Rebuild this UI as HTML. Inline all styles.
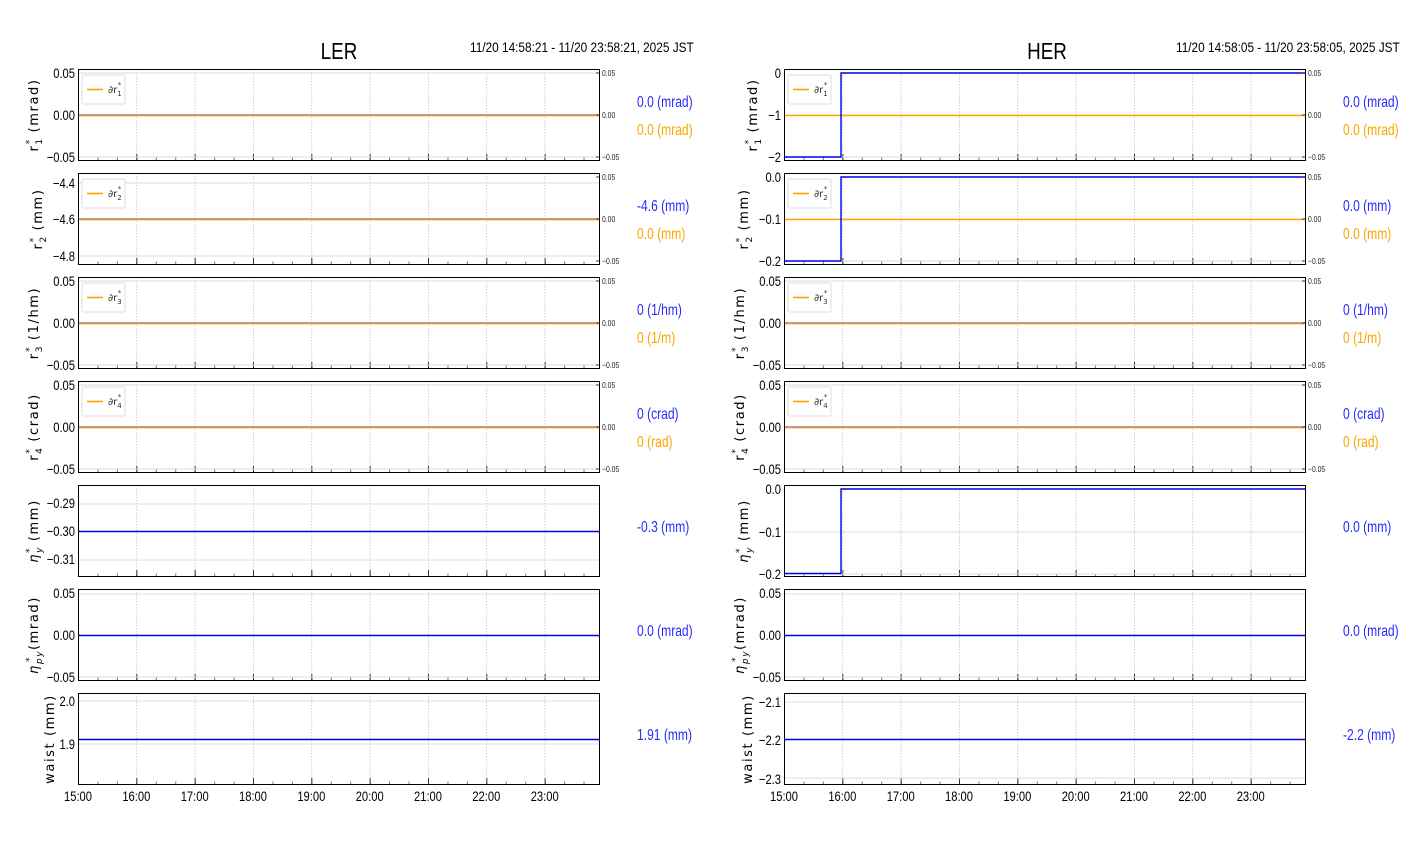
<!DOCTYPE html>
<html><head><meta charset="utf-8"><style>
html,body{margin:0;padding:0;background:#fff;}
svg{display:block;font-family:"Liberation Sans",sans-serif;}
.tl{font-size:14px;fill:#000;text-anchor:end;}
.rl{font-size:8.5px;fill:#222;}
.yl{font-size:13px;font-family:"DejaVu Sans",sans-serif;text-anchor:middle;letter-spacing:1.6px;}
.bv{font-size:15.5px;fill:#2a2aff;}
.ov{font-size:15.5px;fill:#ffa500;}
.xl{font-size:14px;text-anchor:middle;}
</style></head><body>
<svg width="1412" height="864" viewBox="0 0 1412 864" xmlns="http://www.w3.org/2000/svg">
<defs>
<pattern id="vg" patternUnits="userSpaceOnUse" width="58.33" height="92"><line x1="0.3" y1="0" x2="0.3" y2="92" stroke="#b8b8b8" stroke-width="0.8" stroke-dasharray="1.5,1.5"/></pattern>
<pattern id="mt" patternUnits="userSpaceOnUse" width="19.444" height="92"><line x1="0.5" y1="92" x2="0.5" y2="88.5" stroke="#555" stroke-width="0.8"/></pattern>
<pattern id="Mt" patternUnits="userSpaceOnUse" width="58.33" height="92"><line x1="0.5" y1="92" x2="0.5" y2="85" stroke="#333" stroke-width="1"/></pattern>
<g id="fr">
<rect width="522" height="92" fill="url(#vg)"/>
<rect width="522" height="92" fill="url(#mt)"/>
<rect width="522" height="92" fill="url(#Mt)"/>
</g>
<g id="lg">
<rect x="4" y="6" width="43" height="29" rx="2" fill="#fff" stroke="#ddd" stroke-width="1"/>
<line x1="9" y1="20.5" x2="25" y2="20.5" stroke="#ffa500" stroke-width="1.6"/>
</g>
<g id="bd"><rect x="0.5" y="0.5" width="521" height="91" fill="none" stroke="#000" stroke-width="1"/></g>
<g id="rax">
<line x1="522" y1="4" x2="518" y2="4" stroke="#333"/><line x1="522" y1="46" x2="518" y2="46" stroke="#333"/><line x1="522" y1="88" x2="518" y2="88" stroke="#333"/>
</g>
</defs>

<text x="339" y="59" font-size="23" text-anchor="middle" transform="translate(339,0) scale(0.82,1) translate(-339,0)">LER</text>
<text x="0" y="0" font-size="14" transform="translate(470,52) scale(0.845,1)">11/20 14:58:21 - 11/20 23:58:21, 2025 JST</text>
<text x="1047" y="59" font-size="23" text-anchor="middle" transform="translate(1047,0) scale(0.82,1) translate(-1047,0)">HER</text>
<text x="0" y="0" font-size="14" transform="translate(1176,52) scale(0.845,1)">11/20 14:58:05 - 11/20 23:58:05, 2025 JST</text>

<g transform="translate(78,69)">
<use href="#fr"/>
<line x1="0" x2="522" y1="4" y2="4" stroke="#ddd"/><line x1="0" x2="522" y1="88" y2="88" stroke="#ddd"/>
<line x1="0" x2="522" y1="46" y2="46" stroke="#3333ff" stroke-width="1.2"/>
<line x1="0" x2="522" y1="46.5" y2="46.5" stroke="#ffa500" stroke-opacity="0.6" stroke-width="2.2"/>
<use href="#lg"/><use href="#rax"/><use href="#bd"/>
</g>
<g transform="translate(78,173)">
<use href="#fr"/>
<line x1="0" x2="522" y1="10" y2="10" stroke="#ddd"/><line x1="0" x2="522" y1="83" y2="83" stroke="#ddd"/>
<line x1="0" x2="522" y1="46" y2="46" stroke="#3333ff" stroke-width="1.2"/>
<line x1="0" x2="522" y1="46.5" y2="46.5" stroke="#ffa500" stroke-opacity="0.6" stroke-width="2.2"/>
<use href="#lg"/><use href="#rax"/><use href="#bd"/>
</g>
<g transform="translate(78,277)">
<use href="#fr"/>
<line x1="0" x2="522" y1="4" y2="4" stroke="#ddd"/><line x1="0" x2="522" y1="88" y2="88" stroke="#ddd"/>
<line x1="0" x2="522" y1="46" y2="46" stroke="#3333ff" stroke-width="1.2"/>
<line x1="0" x2="522" y1="46.5" y2="46.5" stroke="#ffa500" stroke-opacity="0.6" stroke-width="2.2"/>
<use href="#lg"/><use href="#rax"/><use href="#bd"/>
</g>
<g transform="translate(78,381)">
<use href="#fr"/>
<line x1="0" x2="522" y1="4" y2="4" stroke="#ddd"/><line x1="0" x2="522" y1="88" y2="88" stroke="#ddd"/>
<line x1="0" x2="522" y1="46" y2="46" stroke="#3333ff" stroke-width="1.2"/>
<line x1="0" x2="522" y1="46.5" y2="46.5" stroke="#ffa500" stroke-opacity="0.6" stroke-width="2.2"/>
<use href="#lg"/><use href="#rax"/><use href="#bd"/>
</g>
<g transform="translate(78,485)">
<use href="#fr"/>
<line x1="0" x2="522" y1="19" y2="19" stroke="#ddd"/><line x1="0" x2="522" y1="75" y2="75" stroke="#ddd"/>
<line x1="0" x2="522" y1="46.5" y2="46.5" stroke="#0000ee" stroke-width="1.4"/>
<use href="#bd"/>
</g>
<g transform="translate(78,589)">
<use href="#fr"/>
<line x1="0" x2="522" y1="5" y2="5" stroke="#ddd"/><line x1="0" x2="522" y1="88" y2="88" stroke="#ddd"/>
<line x1="0" x2="522" y1="46.5" y2="46.5" stroke="#0000ee" stroke-width="1.4"/>
<use href="#bd"/>
</g>
<g transform="translate(78,693)">
<use href="#fr"/>
<line x1="0" x2="522" y1="8" y2="8" stroke="#ddd"/><line x1="0" x2="522" y1="51" y2="51" stroke="#ddd"/>
<line x1="0" x2="522" y1="46.5" y2="46.5" stroke="#0000ee" stroke-width="1.4"/>
<use href="#bd"/>
</g>

<g transform="translate(784,69)">
<use href="#fr"/>
<line x1="0" x2="522" y1="46" y2="46" stroke="#ddd"/><line x1="0" x2="522" y1="88" y2="88" stroke="#ddd"/>
<line x1="0" x2="522" y1="46.5" y2="46.5" stroke="#ffa500" stroke-width="1.6"/>
<polyline points="0,88 57,88 57,4 522,4" fill="none" stroke="#0000ee" stroke-width="1.4"/>
<use href="#lg"/><use href="#rax"/><use href="#bd"/>
</g>
<g transform="translate(784,173)">
<use href="#fr"/>
<line x1="0" x2="522" y1="46" y2="46" stroke="#ddd"/><line x1="0" x2="522" y1="88" y2="88" stroke="#ddd"/>
<line x1="0" x2="522" y1="46.5" y2="46.5" stroke="#ffa500" stroke-width="1.6"/>
<polyline points="0,88 57,88 57,4 522,4" fill="none" stroke="#0000ee" stroke-width="1.4"/>
<use href="#lg"/><use href="#rax"/><use href="#bd"/>
</g>
<g transform="translate(784,277)">
<use href="#fr"/>
<line x1="0" x2="522" y1="4" y2="4" stroke="#ddd"/><line x1="0" x2="522" y1="88" y2="88" stroke="#ddd"/>
<line x1="0" x2="522" y1="46" y2="46" stroke="#3333ff" stroke-width="1.2"/>
<line x1="0" x2="522" y1="46.5" y2="46.5" stroke="#ffa500" stroke-opacity="0.6" stroke-width="2.2"/>
<use href="#lg"/><use href="#rax"/><use href="#bd"/>
</g>
<g transform="translate(784,381)">
<use href="#fr"/>
<line x1="0" x2="522" y1="4" y2="4" stroke="#ddd"/><line x1="0" x2="522" y1="88" y2="88" stroke="#ddd"/>
<line x1="0" x2="522" y1="46" y2="46" stroke="#3333ff" stroke-width="1.2"/>
<line x1="0" x2="522" y1="46.5" y2="46.5" stroke="#ffa500" stroke-opacity="0.6" stroke-width="2.2"/>
<use href="#lg"/><use href="#rax"/><use href="#bd"/>
</g>
<g transform="translate(784,485)">
<use href="#fr"/>
<line x1="0" x2="522" y1="47" y2="47" stroke="#ddd"/><line x1="0" x2="522" y1="89" y2="89" stroke="#ddd"/>
<polyline points="0,88.5 57,88.5 57,4 522,4" fill="none" stroke="#0000ee" stroke-width="1.4"/>
<use href="#bd"/>
</g>
<g transform="translate(784,589)">
<use href="#fr"/>
<line x1="0" x2="522" y1="5" y2="5" stroke="#ddd"/><line x1="0" x2="522" y1="88" y2="88" stroke="#ddd"/>
<line x1="0" x2="522" y1="46.5" y2="46.5" stroke="#0000ee" stroke-width="1.4"/>
<use href="#bd"/>
</g>
<g transform="translate(784,693)">
<use href="#fr"/>
<line x1="0" x2="522" y1="9" y2="9" stroke="#ddd"/><line x1="0" x2="522" y1="85" y2="85" stroke="#ddd"/>
<line x1="0" x2="522" y1="46.5" y2="46.5" stroke="#0000ee" stroke-width="1.4"/>
<use href="#bd"/>
</g>

<g font-size="10" font-family="'DejaVu Sans',sans-serif" fill="#333">
<text x="108" y="93">∂r<tspan font-size="7" dy="3">1</tspan><tspan font-size="7" dy="-9" dx="-4">*</tspan></text>
<text x="108" y="197">∂r<tspan font-size="7" dy="3">2</tspan><tspan font-size="7" dy="-9" dx="-4">*</tspan></text>
<text x="108" y="301">∂r<tspan font-size="7" dy="3">3</tspan><tspan font-size="7" dy="-9" dx="-4">*</tspan></text>
<text x="108" y="405">∂r<tspan font-size="7" dy="3">4</tspan><tspan font-size="7" dy="-9" dx="-4">*</tspan></text>
<text x="814" y="93">∂r<tspan font-size="7" dy="3">1</tspan><tspan font-size="7" dy="-9" dx="-4">*</tspan></text>
<text x="814" y="197">∂r<tspan font-size="7" dy="3">2</tspan><tspan font-size="7" dy="-9" dx="-4">*</tspan></text>
<text x="814" y="301">∂r<tspan font-size="7" dy="3">3</tspan><tspan font-size="7" dy="-9" dx="-4">*</tspan></text>
<text x="814" y="405">∂r<tspan font-size="7" dy="3">4</tspan><tspan font-size="7" dy="-9" dx="-4">*</tspan></text>
</g>

<g transform="translate(75,0) scale(0.8,1)">
<text x="0" y="78" class="tl">0.05</text><text x="0" y="120" class="tl">0.00</text><text x="0" y="162" class="tl">−0.05</text>
<text x="0" y="188" class="tl">−4.4</text><text x="0" y="224" class="tl">−4.6</text><text x="0" y="261" class="tl">−4.8</text>
<text x="0" y="286" class="tl">0.05</text><text x="0" y="328" class="tl">0.00</text><text x="0" y="370" class="tl">−0.05</text>
<text x="0" y="390" class="tl">0.05</text><text x="0" y="432" class="tl">0.00</text><text x="0" y="474" class="tl">−0.05</text>
<text x="0" y="508" class="tl">−0.29</text><text x="0" y="536" class="tl">−0.30</text><text x="0" y="564" class="tl">−0.31</text>
<text x="0" y="598" class="tl">0.05</text><text x="0" y="640" class="tl">0.00</text><text x="0" y="682" class="tl">−0.05</text>
<text x="0" y="706" class="tl">2.0</text><text x="0" y="749" class="tl">1.9</text>
</g>
<g transform="translate(781,0) scale(0.8,1)">
<text x="0" y="78" class="tl">0</text><text x="0" y="120" class="tl">−1</text><text x="0" y="162" class="tl">−2</text>
<text x="0" y="182" class="tl">0.0</text><text x="0" y="224" class="tl">−0.1</text><text x="0" y="266" class="tl">−0.2</text>
<text x="0" y="286" class="tl">0.05</text><text x="0" y="328" class="tl">0.00</text><text x="0" y="370" class="tl">−0.05</text>
<text x="0" y="390" class="tl">0.05</text><text x="0" y="432" class="tl">0.00</text><text x="0" y="474" class="tl">−0.05</text>
<text x="0" y="494" class="tl">0.0</text><text x="0" y="537" class="tl">−0.1</text><text x="0" y="579" class="tl">−0.2</text>
<text x="0" y="598" class="tl">0.05</text><text x="0" y="640" class="tl">0.00</text><text x="0" y="682" class="tl">−0.05</text>
<text x="0" y="707" class="tl">−2.1</text><text x="0" y="745" class="tl">−2.2</text><text x="0" y="784" class="tl">−2.3</text>
</g>

<g transform="translate(602,0) scale(0.8,1)">
<text x="0" y="76" class="rl">0.05</text><text x="0" y="118" class="rl">0.00</text><text x="0" y="160" class="rl">−0.05</text>
<text x="0" y="180" class="rl">0.05</text><text x="0" y="222" class="rl">0.00</text><text x="0" y="264" class="rl">−0.05</text>
<text x="0" y="284" class="rl">0.05</text><text x="0" y="326" class="rl">0.00</text><text x="0" y="368" class="rl">−0.05</text>
<text x="0" y="388" class="rl">0.05</text><text x="0" y="430" class="rl">0.00</text><text x="0" y="472" class="rl">−0.05</text>
</g>
<g transform="translate(1308,0) scale(0.8,1)">
<text x="0" y="76" class="rl">0.05</text><text x="0" y="118" class="rl">0.00</text><text x="0" y="160" class="rl">−0.05</text>
<text x="0" y="180" class="rl">0.05</text><text x="0" y="222" class="rl">0.00</text><text x="0" y="264" class="rl">−0.05</text>
<text x="0" y="284" class="rl">0.05</text><text x="0" y="326" class="rl">0.00</text><text x="0" y="368" class="rl">−0.05</text>
<text x="0" y="388" class="rl">0.05</text><text x="0" y="430" class="rl">0.00</text><text x="0" y="472" class="rl">−0.05</text>
</g>

<g transform="translate(637,0) scale(0.78,1)">
<text x="0" y="107" class="bv">0.0 (mrad)</text><text x="0" y="135" class="ov">0.0 (mrad)</text>
<text x="0" y="211" class="bv">-4.6 (mm)</text><text x="0" y="239" class="ov">0.0 (mm)</text>
<text x="0" y="315" class="bv">0 (1/hm)</text><text x="0" y="343" class="ov">0 (1/m)</text>
<text x="0" y="419" class="bv">0 (crad)</text><text x="0" y="447" class="ov">0 (rad)</text>
<text x="0" y="532" class="bv">-0.3 (mm)</text>
<text x="0" y="636" class="bv">0.0 (mrad)</text>
<text x="0" y="740" class="bv">1.91 (mm)</text>
</g>
<g transform="translate(1343,0) scale(0.78,1)">
<text x="0" y="107" class="bv">0.0 (mrad)</text><text x="0" y="135" class="ov">0.0 (mrad)</text>
<text x="0" y="211" class="bv">0.0 (mm)</text><text x="0" y="239" class="ov">0.0 (mm)</text>
<text x="0" y="315" class="bv">0 (1/hm)</text><text x="0" y="343" class="ov">0 (1/m)</text>
<text x="0" y="419" class="bv">0 (crad)</text><text x="0" y="447" class="ov">0 (rad)</text>
<text x="0" y="532" class="bv">0.0 (mm)</text>
<text x="0" y="636" class="bv">0.0 (mrad)</text>
<text x="0" y="740" class="bv">-2.2 (mm)</text>
</g>

<g class="yl">
<text transform="translate(38,115) rotate(-90)">r<tspan font-size="9" dy="4">1</tspan><tspan font-size="9" dy="-10" dx="-7">*</tspan><tspan dy="6">  (mrad)</tspan></text>
<text transform="translate(42,219) rotate(-90)">r<tspan font-size="9" dy="4">2</tspan><tspan font-size="9" dy="-10" dx="-7">*</tspan><tspan dy="6">  (mm)</tspan></text>
<text transform="translate(38,323) rotate(-90)">r<tspan font-size="9" dy="4">3</tspan><tspan font-size="9" dy="-10" dx="-7">*</tspan><tspan dy="6">  (1/hm)</tspan></text>
<text transform="translate(38,427) rotate(-90)">r<tspan font-size="9" dy="4">4</tspan><tspan font-size="9" dy="-10" dx="-7">*</tspan><tspan dy="6">  (crad)</tspan></text>
<text transform="translate(38,531) rotate(-90)"><tspan font-style="italic">η</tspan><tspan font-size="9" dy="4" font-style="italic">y</tspan><tspan font-size="9" dy="-10" dx="-7">*</tspan><tspan dy="6">  (mm)</tspan></text>
<text transform="translate(38,635) rotate(-90)"><tspan font-style="italic">η</tspan><tspan font-size="9" dy="4" font-style="italic">py</tspan><tspan font-size="9" dy="-10" dx="-12">*</tspan><tspan dy="6">  (mrad)</tspan></text>
<text transform="translate(54,739) rotate(-90)">waist  (mm)</text>

<text transform="translate(757,115) rotate(-90)">r<tspan font-size="9" dy="4">1</tspan><tspan font-size="9" dy="-10" dx="-7">*</tspan><tspan dy="6">  (mrad)</tspan></text>
<text transform="translate(748,219) rotate(-90)">r<tspan font-size="9" dy="4">2</tspan><tspan font-size="9" dy="-10" dx="-7">*</tspan><tspan dy="6">  (mm)</tspan></text>
<text transform="translate(744,323) rotate(-90)">r<tspan font-size="9" dy="4">3</tspan><tspan font-size="9" dy="-10" dx="-7">*</tspan><tspan dy="6">  (1/hm)</tspan></text>
<text transform="translate(744,427) rotate(-90)">r<tspan font-size="9" dy="4">4</tspan><tspan font-size="9" dy="-10" dx="-7">*</tspan><tspan dy="6">  (crad)</tspan></text>
<text transform="translate(748,531) rotate(-90)"><tspan font-style="italic">η</tspan><tspan font-size="9" dy="4" font-style="italic">y</tspan><tspan font-size="9" dy="-10" dx="-7">*</tspan><tspan dy="6">  (mm)</tspan></text>
<text transform="translate(744,635) rotate(-90)"><tspan font-style="italic">η</tspan><tspan font-size="9" dy="4" font-style="italic">py</tspan><tspan font-size="9" dy="-10" dx="-12">*</tspan><tspan dy="6">  (mrad)</tspan></text>
<text transform="translate(752,739) rotate(-90)">waist  (mm)</text>
</g>

<g>
<g transform="translate(78,801) scale(0.8,1)"><text x="0" class="xl">15:00</text></g>
<g transform="translate(136.3,801) scale(0.8,1)"><text x="0" class="xl">16:00</text></g>
<g transform="translate(194.7,801) scale(0.8,1)"><text x="0" class="xl">17:00</text></g>
<g transform="translate(253,801) scale(0.8,1)"><text x="0" class="xl">18:00</text></g>
<g transform="translate(311.3,801) scale(0.8,1)"><text x="0" class="xl">19:00</text></g>
<g transform="translate(369.7,801) scale(0.8,1)"><text x="0" class="xl">20:00</text></g>
<g transform="translate(428,801) scale(0.8,1)"><text x="0" class="xl">21:00</text></g>
<g transform="translate(486.3,801) scale(0.8,1)"><text x="0" class="xl">22:00</text></g>
<g transform="translate(544.7,801) scale(0.8,1)"><text x="0" class="xl">23:00</text></g>
<g transform="translate(784,801) scale(0.8,1)"><text x="0" class="xl">15:00</text></g>
<g transform="translate(842.3,801) scale(0.8,1)"><text x="0" class="xl">16:00</text></g>
<g transform="translate(900.7,801) scale(0.8,1)"><text x="0" class="xl">17:00</text></g>
<g transform="translate(959,801) scale(0.8,1)"><text x="0" class="xl">18:00</text></g>
<g transform="translate(1017.3,801) scale(0.8,1)"><text x="0" class="xl">19:00</text></g>
<g transform="translate(1075.7,801) scale(0.8,1)"><text x="0" class="xl">20:00</text></g>
<g transform="translate(1134,801) scale(0.8,1)"><text x="0" class="xl">21:00</text></g>
<g transform="translate(1192.3,801) scale(0.8,1)"><text x="0" class="xl">22:00</text></g>
<g transform="translate(1250.7,801) scale(0.8,1)"><text x="0" class="xl">23:00</text></g>
</g>
</svg>
</body></html>
